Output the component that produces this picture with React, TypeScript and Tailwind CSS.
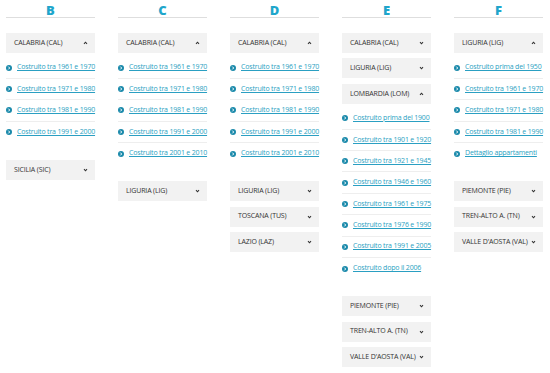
import React from "react";

type Section = { label: string; open?: boolean; links?: string[] };
type Col = { letter: string; sections: Section[] };

const cols: Col[] = [
  {
    letter: "B",
    sections: [
      {
        label: "CALABRIA (CAL)",
        open: true,
        links: ["Costruito tra 1961 e 1970", "Costruito tra 1971 e 1980", "Costruito tra 1981 e 1990", "Costruito tra 1991 e 2000"],
      },
      { label: "SICILIA (SIC)" },
    ],
  },
  {
    letter: "C",
    sections: [
      {
        label: "CALABRIA (CAL)",
        open: true,
        links: [
          "Costruito tra 1961 e 1970",
          "Costruito tra 1971 e 1980",
          "Costruito tra 1981 e 1990",
          "Costruito tra 1991 e 2000",
          "Costruito tra 2001 e 2010",
        ],
      },
      { label: "LIGURIA (LIG)" },
    ],
  },
  {
    letter: "D",
    sections: [
      {
        label: "CALABRIA (CAL)",
        open: true,
        links: [
          "Costruito tra 1961 e 1970",
          "Costruito tra 1971 e 1980",
          "Costruito tra 1981 e 1990",
          "Costruito tra 1991 e 2000",
          "Costruito tra 2001 e 2010",
        ],
      },
      { label: "LIGURIA (LIG)" },
      { label: "TOSCANA (TUS)" },
      { label: "LAZIO (LAZ)" },
    ],
  },
  {
    letter: "E",
    sections: [
      { label: "CALABRIA (CAL)" },
      { label: "LIGURIA (LIG)" },
      {
        label: "LOMBARDIA (LOM)",
        open: true,
        links: [
          "Costruito prima del 1900",
          "Costruito tra 1901 e 1920",
          "Costruito tra 1921 e 1945",
          "Costruito tra 1946 e 1960",
          "Costruito tra 1961 e 1975",
          "Costruito tra 1976 e 1990",
          "Costruito tra 1991 e 2005",
          "Costruito dopo il 2006",
        ],
      },
      { label: "PIEMONTE (PIE)" },
      { label: "TREN-ALTO A. (TN)" },
      { label: "VALLE D'AOSTA (VAL)" },
    ],
  },
  {
    letter: "F",
    sections: [
      {
        label: "LIGURIA (LIG)",
        open: true,
        links: [
          "Costruito prima del 1950",
          "Costruito tra 1961 e 1970",
          "Costruito tra 1971 e 1980",
          "Costruito tra 1981 e 1990",
          "Dettaglio appartamenti",
        ],
      },
      { label: "PIEMONTE (PIE)" },
      { label: "TREN-ALTO A. (TN)" },
      { label: "VALLE D'AOSTA (VAL)" },
    ],
  },
];

function Chevron({ up }: { up?: boolean }) {
  return (
    <svg width="5" height="4" viewBox="0 0 5 4" className="shrink-0">
      {up ? (
        <polyline points="1,2.8 2.5,1.2 4,2.8" fill="none" stroke="#333" strokeWidth="1.1" />
      ) : (
        <polyline points="1,1.2 2.5,2.8 4,1.2" fill="none" stroke="#333" strokeWidth="1.1" />
      )}
    </svg>
  );
}

function LinkIcon() {
  return (
    <svg width="6" height="6" viewBox="0 0 6 6" className="shrink-0">
      <circle cx="3" cy="3" r="3" fill="#1b8aab" />
      <polyline points="2.3,1.6 3.7,3 2.3,4.4" fill="none" stroke="#fff" strokeWidth="1" />
    </svg>
  );
}

export default function App() {
  return (
    <div
      className="w-[550px] h-[373px] bg-white overflow-hidden flex gap-[23px] pl-[6px]"
      style={{ fontFamily: "'Open Sans', 'Liberation Sans', sans-serif" }}
    >
      {cols.map((c) => (
        <div key={c.letter} className="w-[89px] flex flex-col">
          <div className="h-[18px] flex items-center justify-center border-b border-[#dedede] text-[13px] font-extrabold text-[#1fa6cb] leading-none pt-[3px]">
            {c.letter}
          </div>
          <div className="mt-[15px] flex flex-col">
            {c.sections.map((s, i) => (
              <div key={i} className="flex flex-col">
                <div className="h-[20px] bg-[#f2f2f2] flex items-center justify-between pl-[8px] pr-[7px] mb-[5.4px] text-[7px] tracking-[-0.15px] text-[#333] whitespace-nowrap">
                  <span>{s.label}</span>
                  <Chevron up={s.open} />
                </div>
                {s.open && s.links && (
                  <div className="flex flex-col -mt-[1px] mb-[17px]">
                    {s.links.map((l, j) => (
                      <div
                        key={j}
                        className={
                          "h-[21.4px] flex items-center gap-[5px] " +
                          (j < s.links!.length - 1 ? "border-b border-[#eeeeee]" : "")
                        }
                      >
                        <LinkIcon />
                        <span className="text-[7px] text-[#2a9fc2] underline whitespace-nowrap tracking-[-0.18px]">{l}</span>
                      </div>
                    ))}
                  </div>
                )}
              </div>
            ))}
          </div>
        </div>
      ))}
    </div>
  );
}
